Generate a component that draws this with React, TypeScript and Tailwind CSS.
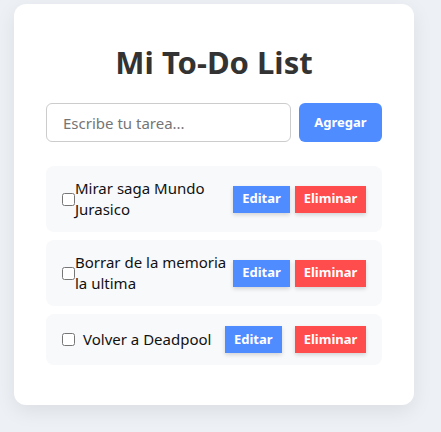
import React from "react";

const tasks = [
  { id: 1, text: "Mirar saga Mundo Jurasico", tight: true },
  { id: 2, text: "Borrar de la memoria la ultima", tight: true },
  { id: 3, text: "Volver a Deadpool", tight: false },
];

export default function App() {
  return (
    <div className="min-h-[432px] w-[441px] bg-[#edf0f5] pt-[4px] pl-[14px]"
      style={{ fontFamily: '"Noto Sans", "Open Sans", sans-serif' }}>
      <div className="w-[400px] rounded-xl bg-white px-8 pt-[34px] pb-[40px] shadow-[0_6px_20px_rgba(0,0,0,0.08)]">
        <h1 className="text-center text-[31px] font-bold leading-[48px] text-[#333]">Mi To-Do List</h1>

        <div className="mt-[17px] flex gap-2">
          <input
            type="text"
            placeholder="Escribe tu tarea..."
            className="h-[39px] w-[245px] rounded-md border border-[#ccc] px-4 text-[15px] text-[#333] placeholder:text-[#757575] outline-none"
          />
          <button className="h-[39px] flex-1 rounded-md bg-[#4f8cff] text-[13px] font-bold text-white">
            Agregar
          </button>
        </div>

        <ul className="mt-6 flex flex-col gap-2">
          {tasks.map((t) => (
            <li key={t.id} className="flex items-center justify-between rounded-lg bg-[#f8f9fb] py-3 pl-4 pr-4">
              <label className={`flex min-w-0 items-center ${t.tight ? "gap-0" : "gap-2 whitespace-nowrap"}`}>
                <input type="checkbox" className="m-0 h-[13px] w-[13px] shrink-0" />
                <span className="text-[15px] leading-[21px] text-[#111]">{t.text}</span>
              </label>
              <button className="ml-[5px] h-[27px] w-[57px] shrink-0 bg-[#4f8cff] text-[13px] font-bold text-white shadow-[0_2px_4px_rgba(0,0,0,0.15)]">
                Editar
              </button>
              <button className="ml-[5px] h-[27px] w-[71px] shrink-0 bg-[#ff4d4d] text-[13px] font-bold text-white shadow-[0_2px_4px_rgba(0,0,0,0.15)]">
                Eliminar
              </button>
            </li>
          ))}
        </ul>
      </div>
    </div>
  );
}
